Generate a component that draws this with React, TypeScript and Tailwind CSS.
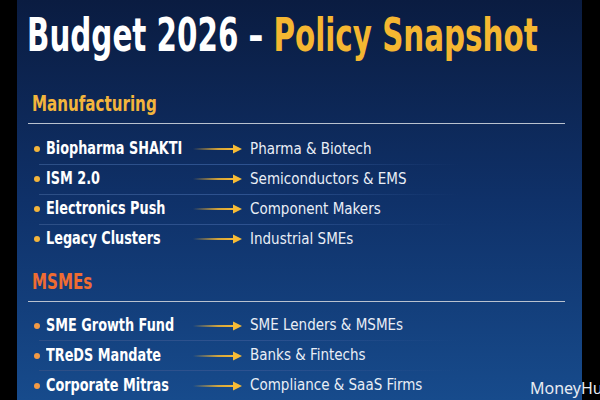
import React from 'react';

type Item = { name: string; target: string };

const manufacturing: Item[] = [
  { name: 'Biopharma SHAKTI', target: 'Pharma & Biotech' },
  { name: 'ISM 2.0', target: 'Semiconductors & EMS' },
  { name: 'Electronics Push', target: 'Component Makers' },
  { name: 'Legacy Clusters', target: 'Industrial SMEs' },
];

const msmes: Item[] = [
  { name: 'SME Growth Fund', target: 'SME Lenders & MSMEs' },
  { name: 'TReDS Mandate', target: 'Banks & Fintechs' },
  { name: 'Corporate Mitras', target: 'Compliance & SaaS Firms' },
];

function Arrow() {
  return (
    <svg width="50" height="12" viewBox="0 0 50 12" className="shrink-0">
      <defs>
        <linearGradient id="arrowFade" x1="0" y1="0" x2="1" y2="0">
          <stop offset="0" stopColor="#f5b731" stopOpacity="0" />
          <stop offset="0.6" stopColor="#f5b731" stopOpacity="0.85" />
          <stop offset="1" stopColor="#f7bb35" />
        </linearGradient>
      </defs>
      <rect x="0" y="5" width="42" height="2" fill="url(#arrowFade)" />
      <path d="M40 1.5 L49 6 L40 10.5 Z" fill="#f7bb35" />
    </svg>
  );
}

function Rows({ items, dot }: { items: Item[]; dot: string }) {
  return (
    <div className="flex flex-col">
      {items.map((item, i) => (
        <div key={item.name}>
          {i > 0 && <div className="ml-[22px] h-px w-[420px] bg-gradient-to-r from-[#2d4f86] via-[#2d5290] to-transparent" />}
          <div className="flex h-[29px] items-center pl-[17px]">
            <span className={`h-[6px] w-[6px] shrink-0 rounded-full ${dot}`} />
            <span className="ml-[6px] w-[147px] shrink-0 whitespace-nowrap">
              <span className="inline-block origin-left scale-x-[0.84] text-[17px] font-bold text-white">{item.name}</span>
            </span>
            <Arrow />
            <span className="ml-[7px] whitespace-nowrap text-[15px] text-[#e9eef6]">{item.target}</span>
          </div>
        </div>
      ))}
    </div>
  );
}

export default function App() {
  return (
    <div className="relative h-[400px] w-[600px] overflow-hidden bg-black font-['DejaVu_Sans_Condensed','DejaVu_Sans',sans-serif]">
      <div className="ml-[17px] flex h-full w-[565px] flex-col bg-gradient-to-b from-[#0a1c41] via-[#0f3169] to-[#174b8c]">
        {/* Title */}
        <h1 className="mt-[12px] pl-[10px] whitespace-nowrap text-[46px] leading-[46px] font-bold text-white">
          <span className="inline-block origin-left scale-x-[0.71]">
            Budget 2026 – <span className="text-[#f5b731]">Policy Snapshot</span>
          </span>
        </h1>
        <div className="mt-[4px] -ml-[2px] h-[2px] w-[555px] bg-gradient-to-r from-[#3c5d95] via-[#e3ebf7] to-transparent" />

        {/* Manufacturing */}
        <h2 className="mt-[31px] pl-[15px] whitespace-nowrap text-[21px] leading-[22px] font-bold text-[#f3b53c]">
          <span className="inline-block origin-left scale-x-[0.8]">Manufacturing</span>
        </h2>
        <div className="mt-[8px] ml-[11px] h-[3px] w-[537px] bg-[#b9c2cf]" />
        <div className="mt-[11px]">
          <Rows items={manufacturing} dot="bg-[#f3b53c]" />
        </div>

        {/* MSMEs */}
        <h2 className="mt-[17px] pl-[15px] whitespace-nowrap text-[21px] leading-[22px] font-bold text-[#ef6c32]">
          <span className="inline-block origin-left scale-x-[0.8]">MSMEs</span>
        </h2>
        <div className="mt-[8px] ml-[11px] h-[3px] w-[537px] bg-[#b9c2cf]" />
        <div className="mt-[10px]">
          <Rows items={msmes} dot="bg-[#f39a45]" />
        </div>
      </div>

      <span className="absolute left-[530px] top-[379px] whitespace-nowrap font-['Noto_Sans',sans-serif] text-[16px] leading-[18px] text-[#e8ecf2]">
        MoneyHu
      </span>
    </div>
  );
}
